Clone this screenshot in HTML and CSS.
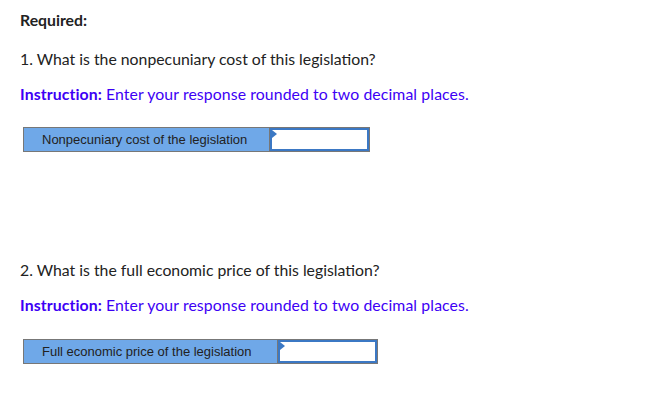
FILE: index.html
```html
<!DOCTYPE html>
<html>
<head>
<meta charset="utf-8">
<link rel="stylesheet" href="styles.css">
</head>
<body>
<div class="page">
  <p class="heading">Required:</p>
  <p class="question">1. What is the nonpecuniary cost of this legislation?</p>
  <p class="instruction"><strong>Instruction:</strong> Enter your response rounded to two decimal places.</p>
  <div class="answer first">
    <div class="label">Nonpecuniary cost of the legislation</div>
    <div class="input"><span class="flag"></span></div>
  </div>
  <p class="question q2">2. What is the full economic price of this legislation?</p>
  <p class="instruction"><strong>Instruction:</strong> Enter your response rounded to two decimal places.</p>
  <div class="answer second">
    <div class="label">Full economic price of the legislation</div>
    <div class="input"><span class="flag"></span></div>
  </div>
</div>
</body>
</html>
```
FILE: styles.css
```css
html, body {
  margin: 0;
  padding: 0;
  background: #fff;
}
.page {
  padding: 11px 20px 0 20px;
  font-family: Lato, "Open Sans", sans-serif;
  font-size: 15.8px;
  color: #222;
}
p {
  margin: 0;
  line-height: 18px;
}
.heading {
  font-weight: bold;
}
.question {
  margin-top: 21px;
}
.q2 {
  margin-top: 0;
}
.instruction {
  margin-top: 17px;
  color: #3d00f5;
  letter-spacing: 0.1px;
}
.instruction strong {
  font-weight: bold;
}
.answer {
  display: inline-flex;
  margin: 24px 0 0 3px;
  border: 1px solid #777;
  height: 23px;
  font-family: "Liberation Sans", Arial, sans-serif;
  font-size: 13px;
  color: #222;
}
.answer.first {
  margin-bottom: 109px;
}
.answer.second {
  margin-top: 25px;
}
.label {
  background: #6fa8e8;
  padding: 0 22px 0 18px;
  display: flex;
  align-items: center;
  border-right: 1px solid #777;
}
.second .label {
  padding-right: 25px;
}
.input {
  position: relative;
  width: 95px;
  border: 2px solid #3b78c4;
  background: #fff;
}
.flag {
  position: absolute;
  left: 0;
  top: 0;
  width: 0;
  height: 0;
  border-top: 4px solid transparent;
  border-bottom: 4px solid transparent;
  border-left: 5px solid #3b78c4;
}
```
